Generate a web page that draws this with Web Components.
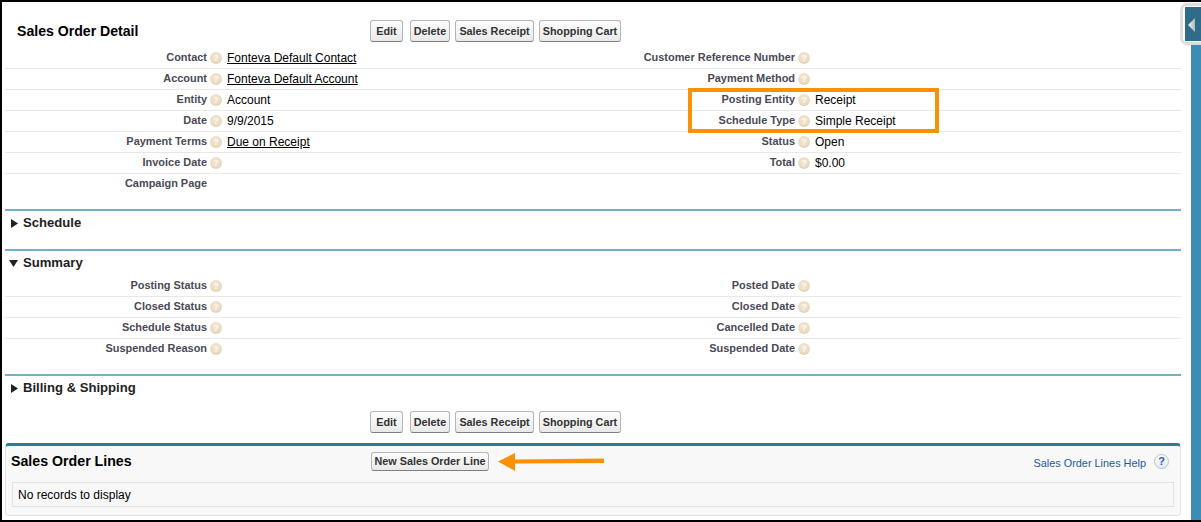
<!DOCTYPE html>
<html><head><meta charset="utf-8">
<style>
html,body{margin:0;padding:0;background:#000;}
body{width:1201px;height:522px;overflow:hidden;font-family:"Liberation Sans",Arial,sans-serif;}
</style></head>
<body>
<sf-app>
  <sf-detail-head title-text="Sales Order Detail"></sf-detail-head>
  <sf-grid>
    <sf-field label="Contact" help link value="Fonteva Default Contact"></sf-field>
    <sf-field label="Customer Reference Number" help></sf-field>
    <sf-field label="Account" help link value="Fonteva Default Account"></sf-field>
    <sf-field label="Payment Method" help></sf-field>
    <sf-field label="Entity" help value="Account"></sf-field>
    <sf-field label="Posting Entity" help value="Receipt"></sf-field>
    <sf-field label="Date" help value="9/9/2015"></sf-field>
    <sf-field label="Schedule Type" help value="Simple Receipt"></sf-field>
    <sf-field label="Payment Terms" help link value="Due on Receipt"></sf-field>
    <sf-field label="Status" help value="Open"></sf-field>
    <sf-field label="Invoice Date" help></sf-field>
    <sf-field label="Total" help value="$0.00"></sf-field>
    <sf-field label="Campaign Page" last></sf-field>
    <sf-field last></sf-field>
  </sf-grid>
  <sf-section heading="Schedule" style="margin-top:14px;height:40px"></sf-section>
  <sf-section heading="Summary" open style="height:125px">
    <sf-grid>
      <sf-field label="Posting Status" help></sf-field>
      <sf-field label="Posted Date" help></sf-field>
      <sf-field label="Closed Status" help></sf-field>
      <sf-field label="Closed Date" help></sf-field>
      <sf-field label="Schedule Status" help></sf-field>
      <sf-field label="Cancelled Date" help></sf-field>
      <sf-field label="Suspended Reason" help last></sf-field>
      <sf-field label="Suspended Date" help last></sf-field>
    </sf-grid>
  </sf-section>
  <sf-section heading="Billing &amp; Shipping" style="height:35px"></sf-section>
  <sf-actions style="height:34px;padding-top:2px"></sf-actions>
  <sf-related></sf-related>
  <sf-callout></sf-callout>
  <sf-arrow></sf-arrow>
  <sf-sidetab></sf-sidetab>
</sf-app>
<script>
function def(name, html){
  customElements.define(name, class extends HTMLElement{
    connectedCallback(){
      if(this.shadowRoot) return;
      const r=this.attachShadow({mode:'open'});
      r.innerHTML = typeof html==='function' ? html(this) : html;
    }
  });
}
const esc=s=>(s||'').replace(/&/g,'&amp;');
def('sf-app',`<style>
:host{display:block;position:relative;box-sizing:border-box;height:518px;margin-top:2px;margin-left:2px;width:1199px;background:#fff;padding:0 20px 0 3px;}
</style><slot></slot>`);
def('sf-help',`<style>
:host{display:inline-block;width:12px;height:12px;border-radius:50%;
background:radial-gradient(circle at 45% 35%,#f2e4d0 0,#ecdcc4 55%,#d8c2a4 100%);
color:#fdf9f2;font:bold 9px/12px "Liberation Sans",sans-serif;text-align:center;}
</style>?`);
def('sf-button',`<style>
:host{display:inline-block;box-sizing:border-box;height:22px;border:1px solid #b5b5b5;border-bottom-color:#7f7f7f;border-radius:3px;
background:linear-gradient(#fdfdfd,#f2f2f2 55%,#e9e9e9);color:#333;font:bold 10.8px/20px "Liberation Sans",sans-serif;text-align:center;white-space:nowrap;}
</style><slot></slot>`);
def('sf-actions',`<style>
:host{display:flex;box-sizing:border-box;height:32px;padding-left:365px;}
.e{width:33px}.d{width:40px;margin-left:7px}.s{width:79px;margin-left:5px}.c{width:82px;margin-left:5px}
</style><sf-button class="e">Edit</sf-button><sf-button class="d">Delete</sf-button><sf-button class="s">Sales Receipt</sf-button><sf-button class="c">Shopping Cart</sf-button>`);
def('sf-detail-head',el=>`<style>
:host{display:flex;box-sizing:border-box;height:46px;padding-top:18px;position:relative}
h2{margin:0;width:365px;flex:none;box-sizing:border-box;padding-left:12px;font:bold 14.1px/22px "Liberation Sans",sans-serif;color:#000}
sf-actions{padding-left:0}
</style><h2>${el.getAttribute('title-text')}</h2><sf-actions></sf-actions>`);
def('sf-grid',`<style>
:host{display:grid;grid-template-columns:590px 1fr;}
</style><slot></slot>`);
def('sf-field',el=>{
  const label=el.getAttribute('label')||'', v=el.getAttribute('value')||'';
  const help=el.hasAttribute('help'), link=el.hasAttribute('link'), last=el.hasAttribute('last');
  return `<style>
:host{display:grid;grid-template-columns:202px 20px 1fr;grid-template-rows:20px;box-sizing:border-box;height:21px;border-bottom:1px solid ${last?'transparent':'#e8e8e8'};align-items:start}
:host(:nth-child(even)){grid-template-columns:200px 20px 1fr}
.l{text-align:right;font:bold 10.95px/18px "Liberation Sans",sans-serif;color:#4a4a56;white-space:nowrap}
.h{display:flex;justify-content:center;padding:4px 2px 0 0}
.v{font:12px/20px "Liberation Sans",sans-serif;color:#000;white-space:nowrap}
u{text-decoration:underline}
</style><div class="l">${label}</div><div class="h">${help?'<sf-help></sf-help>':''}</div><div class="v">${link?`<u>${v}</u>`:v}</div>`;
});
def('sf-section',el=>{
  const open=el.hasAttribute('open');
  const tri=open?'<path d="M0 1H9L4.5 8Z" fill="#222"/>':'<path d="M1 0L8 4.5L1 9Z" fill="#222"/>';
  return `<style>
:host{display:block;box-sizing:border-box;border-top:2px solid #6fb4c3;}
.t{display:flex;align-items:center;height:25px;padding-bottom:1px;box-sizing:border-box;font:bold 13.1px/24px "Liberation Sans",sans-serif;color:#222;gap:4px;padding-left:5px}
svg{width:9px;height:9px;flex:none}
</style><div class="t"><svg viewBox="0 0 9 9"${open?' style="margin-left:-1px;margin-right:1px"':''}>${tri}</svg><span>${esc(el.getAttribute('heading'))}</span></div><slot></slot>`;
});
def('sf-related',`<style>
:host{display:block;box-sizing:border-box;height:73px;background:#f8f8f8;border:1px solid #e0e3e5;border-top:3px solid #317a96;border-radius:4px;padding:0 5px;}
.top{display:grid;grid-template-columns:360px 1fr auto;align-items:center;height:31px}
h3{margin:0;padding-bottom:2px;font:bold 14.2px/20px "Liberation Sans",sans-serif;color:#000}
a{font:10.9px/20px "Liberation Sans",sans-serif;color:#1f5aa5;text-decoration:none;display:flex;align-items:center;gap:8px;padding-right:6px}
a span.x{padding-top:2px}
.q{width:15px;height:15px;border-radius:50%;box-sizing:border-box;border:1px solid #b9c4cf;background:linear-gradient(#fff,#e4e9ef);color:#2560ad;font:bold 11px/13px "Liberation Sans",sans-serif;text-align:center}
.n{width:118px;height:19px;font-size:10.8px;line-height:17px}
.box{box-sizing:border-box;height:25px;border:1px solid #e0e3e5;font:12px/25px "Liberation Sans",sans-serif;color:#000;padding-left:5px;margin:5px 1px 0 1px}
.m{display:flex}
</style><div class="top"><h3>Sales Order Lines</h3><div class="m"><sf-button class="n">New Sales Order Line</sf-button></div><a><span class="x">Sales Order Lines Help</span> <span class="q">?</span></a></div><div class="box">No records to display</div>`);
def('sf-callout',`<style>
:host{position:absolute;left:686px;top:86px;width:251px;height:45px;box-sizing:border-box;border:4px solid #fb9005;}
</style>`);
def('sf-arrow',`<style>
:host{position:absolute;left:496px;top:449px;width:108px;height:22px}
svg{display:block}
</style><svg width="108" height="22" viewBox="0 0 108 22"><path d="M0 10.5L17 2V8.5L106 7.5V12L17 12.5V20Z" fill="#fb9005"/></svg>`);
def('sf-sidetab',`<style>
:host{position:absolute;right:0;top:0;width:21px;height:518px;display:block}
.h{position:absolute;right:0;top:1px;width:21px;height:42px;box-sizing:border-box;background:#fff;border:3px solid #dedede;border-right:0;border-radius:7px 0 0 7px}
.b{position:absolute;right:0;top:5px;width:16px;height:34px;background:#2f6c88}
svg{position:absolute;left:3px;top:11px}
.s{position:absolute;right:0;top:43px;bottom:0;width:10px;background:#3a8db5}
</style><div class="h"></div><div class="b"><svg width="8" height="14" viewBox="0 0 8 14"><defs><linearGradient id="g" x1="0" x2="1"><stop offset="0" stop-color="#f2f5f6"/><stop offset="1" stop-color="#a9b9c1"/></linearGradient></defs><path d="M7 0V14L0 7Z" fill="url(#g)"/></svg></div><div class="s"></div>`);
</script>
</body></html>
